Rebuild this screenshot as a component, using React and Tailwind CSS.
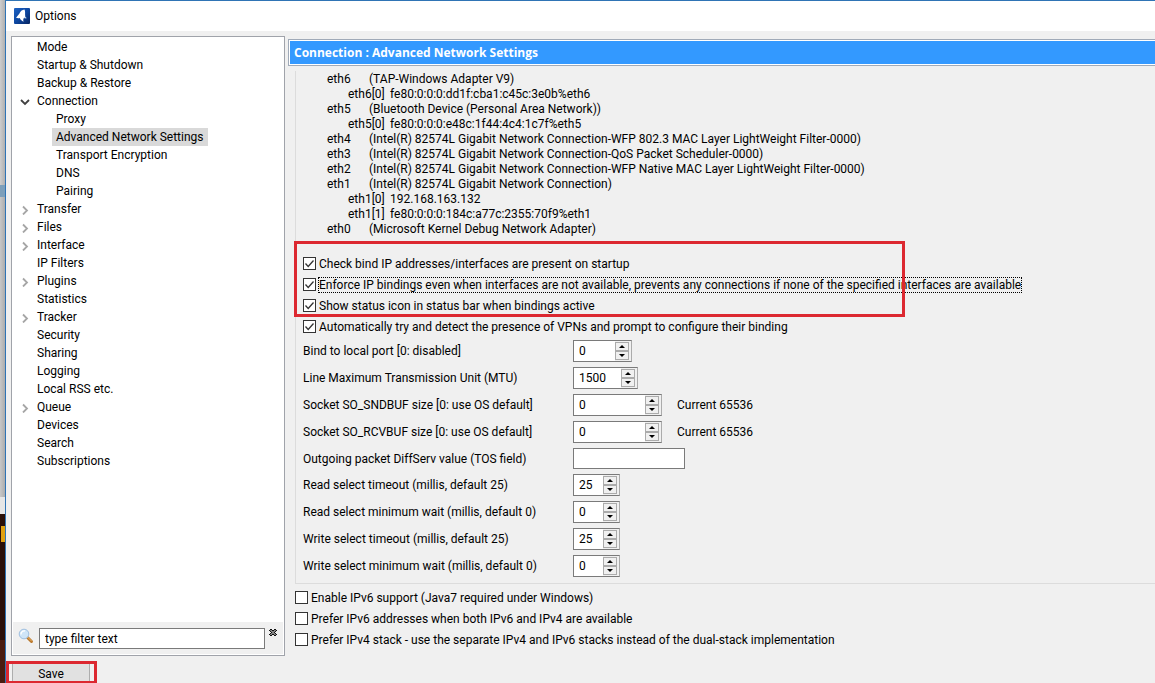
import React from 'react';
import { clsx } from 'clsx';

const treeItems = [
  { label: 'Mode' },
  { label: 'Startup & Shutdown' },
  { label: 'Backup & Restore' },
  { label: 'Connection', state: 'open' },
  { label: 'Proxy', child: true },
  { label: 'Advanced Network Settings', child: true, selected: true },
  { label: 'Transport Encryption', child: true },
  { label: 'DNS', child: true },
  { label: 'Pairing', child: true },
  { label: 'Transfer', state: 'closed' },
  { label: 'Files', state: 'closed' },
  { label: 'Interface', state: 'closed' },
  { label: 'IP Filters' },
  { label: 'Plugins', state: 'closed' },
  { label: 'Statistics' },
  { label: 'Tracker', state: 'closed' },
  { label: 'Security' },
  { label: 'Sharing' },
  { label: 'Logging' },
  { label: 'Local RSS etc.' },
  { label: 'Queue', state: 'closed' },
  { label: 'Devices' },
  { label: 'Search' },
  { label: 'Subscriptions' },
];

const adapters = [
  { name: 'eth6', info: '(TAP-Windows Adapter V9)' },
  { name: 'eth6[0]', info: 'fe80:0:0:0:dd1f:cba1:c45c:3e0b%eth6', address: true },
  { name: 'eth5', info: '(Bluetooth Device (Personal Area Network))' },
  { name: 'eth5[0]', info: 'fe80:0:0:0:e48c:1f44:4c4:1c7f%eth5', address: true },
  { name: 'eth4', info: '(Intel(R) 82574L Gigabit Network Connection-WFP 802.3 MAC Layer LightWeight Filter-0000)' },
  { name: 'eth3', info: '(Intel(R) 82574L Gigabit Network Connection-QoS Packet Scheduler-0000)' },
  { name: 'eth2', info: '(Intel(R) 82574L Gigabit Network Connection-WFP Native MAC Layer LightWeight Filter-0000)' },
  { name: 'eth1', info: '(Intel(R) 82574L Gigabit Network Connection)' },
  { name: 'eth1[0]', info: '192.168.163.132', address: true },
  { name: 'eth1[1]', info: 'fe80:0:0:0:184c:a77c:2355:70f9%eth1', address: true },
  { name: 'eth0', info: '(Microsoft Kernel Debug Network Adapter)' },
];

const fields = [
  { id: 'port', label: 'Bind to local port [0: disabled]', value: '0', width: 'w-[59px]' },
  { id: 'mtu', label: 'Line Maximum Transmission Unit (MTU)', value: '1500', width: 'w-[65px]' },
  { id: 'sndbuf', label: 'Socket SO_SNDBUF size [0: use OS default]', value: '0', width: 'w-[89px]', note: 'Current 65536' },
  { id: 'rcvbuf', label: 'Socket SO_RCVBUF size [0: use OS default]', value: '0', width: 'w-[89px]', note: 'Current 65536' },
  { id: 'tos', label: 'Outgoing packet DiffServ value (TOS field)', plain: true },
  { id: 'read-timeout', label: 'Read select timeout (millis, default 25)', value: '25', width: 'w-[47px]' },
  { id: 'read-wait', label: 'Read select minimum wait (millis, default 0)', value: '0', width: 'w-[47px]' },
  { id: 'write-timeout', label: 'Write select timeout (millis, default 25)', value: '25', width: 'w-[47px]' },
  { id: 'write-wait', label: 'Write select minimum wait (millis, default 0)', value: '0', width: 'w-[47px]' },
];

function AppIcon() {
  return (
    <svg width="16" height="16" viewBox="0 0 16 16" aria-hidden="true">
      <defs>
        <linearGradient id="logo-bg" x1="0" y1="0" x2="1" y2="1">
          <stop offset="0" stopColor="#1e63c4" />
          <stop offset="0.5" stopColor="#0d47a1" />
          <stop offset="1" stopColor="#06245f" />
        </linearGradient>
      </defs>
      <rect width="16" height="16" rx="1" fill="url(#logo-bg)" />
      <path d="M10.500 1.500C8 1.800 6.200 3.400 5.300 5.800L2 9.800c1.500.6 2.700.6 3.800.2.500 1.600 1.800 2.800 3.800 3.800-.5-1.300-.4-2.500.1-3.500 1-.5 1.700-1.200 1.500-2.600-.3-2 .3-4.200-.7-6.200z" fill="#fff" />
      <path d="M10.500 10.500l1-2 1.200 1.700z" fill="#c9e2f8" />
    </svg>
  );
}

function SearchIcon() {
  return (
    <svg width="16" height="16" viewBox="0 0 16 16" aria-hidden="true">
      <path d="M9.500 9.500l4 4" stroke="#b9772c" strokeWidth="3" strokeLinecap="round" />
      <path d="M9.800 9.300l3.700 3.700" stroke="#e9b568" strokeWidth="1" strokeLinecap="round" />
      <circle cx="6" cy="6" r="4.800" fill="#cfe5f8" stroke="#9fbfe0" />
      <path d="M3 6.500a3.200 3.200 0 0 1 4-3.500" fill="none" stroke="#fff" strokeWidth="1.400" />
    </svg>
  );
}

function ClearIcon() {
  return (
    <svg width="8" height="7" viewBox="0 0 8 7" shapeRendering="crispEdges" aria-hidden="true">
      <path d="M1 0h2v1h2V0h2v1h1v1H7v1H6v1h1v1h1v1H7v1H5V6H3v1H1V6H0V5h1V4h1V3H1V2H0V1h1z" fill="#111" />
      <path d="M1 1h2v1h2V1h2v1H6v1H5v1h1v1h1v1H5V5H3v1H1V5h1V4h1V3H2V2H1z" fill="#858585" />
    </svg>
  );
}

function Twisty({ state }) {
  if (state === 'open') {
    return (
      <svg width="10" height="10" viewBox="0 0 10 10" aria-hidden="true">
        <path d="M1 3l4 4 4-4" fill="none" stroke="#404040" strokeWidth="1.800" />
      </svg>
    );
  }
  return (
    <svg width="10" height="10" viewBox="0 0 10 10" aria-hidden="true">
      <path d="M3 1.500l4 4-4 4" fill="none" stroke="#a6a6a6" strokeWidth="1.800" />
    </svg>
  );
}

function TreeItem({ item }) {
  return (
    <li className={clsx('flex h-[18px] items-center', item.child ? 'pl-[39px]' : 'pl-[7px]')}>
      {!item.child && <span className="w-[13px] pt-px">{item.state && <Twisty state={item.state} />}</span>}
      <a href="#" className={clsx('h-[18px] px-1 leading-[18px]', item.selected && 'bg-[#d9d9d9]')}>
        {item.label}
      </a>
    </li>
  );
}

function CheckRow({ label, checked, focused }) {
  return (
    <label className="flex h-[21px] items-center gap-[2px]">
      <span className="relative flex">
        <input
          type="checkbox"
          defaultChecked={checked}
          className="peer size-[13px] appearance-none border border-[#333] bg-white"
        />
        <svg
          width="13"
          height="13"
          viewBox="0 0 13 13"
          className="pointer-events-none absolute inset-0 hidden peer-checked:block"
          aria-hidden="true"
        >
          <path d="M2.500 6.500l2.700 3 5.300-6" fill="none" stroke="#333" strokeWidth="1.300" />
        </svg>
      </span>
      <span className={clsx('border border-dotted leading-[14px]', focused ? 'border-black' : 'border-transparent')}>
        {label}
      </span>
    </label>
  );
}

function Spinner({ id, value, width }) {
  return (
    <div className={clsx('flex h-[22px] border border-t-[#7a7a7a] border-r-[#ababab] border-b-[#7a7a7a] border-l-[#7a7a7a] bg-[#f0f0f0]', width)}>
      <input id={id} type="text" defaultValue={value} className="w-0 flex-1 bg-white pl-[5px] outline-none" />
      <div className="flex w-4 flex-col py-px pr-[2px]">
        <button type="button" aria-label="Increase" className="flex flex-1 items-center justify-center border border-[#ababab] bg-[#f0f0f0]">
          <svg width="6" height="3" viewBox="0 0 6 3" aria-hidden="true">
            <path d="M0 3l3-3 3 3z" fill="#000" />
          </svg>
        </button>
        <button type="button" aria-label="Decrease" className="flex flex-1 items-center justify-center border border-[#ababab] bg-[#f0f0f0]">
          <svg width="6" height="3" viewBox="0 0 6 3" aria-hidden="true">
            <path d="M0 0l3 3 3-3z" fill="#000" />
          </svg>
        </button>
      </div>
    </div>
  );
}

function Field({ field }) {
  return (
    <div className="flex items-center">
      <label htmlFor={field.id} className="w-[270px]">{field.label}</label>
      {field.plain ? (
        <input id={field.id} type="text" className="h-[21px] w-28 border border-[#7a7a7a] bg-white px-1 outline-none" />
      ) : (
        <Spinner id={field.id} value={field.value} width={field.width} />
      )}
      {field.note && <span className="pl-[15px]">{field.note}</span>}
    </div>
  );
}

function Sidebar() {
  return (
    <div className="flex w-[274px] flex-1 flex-col border border-[#a0a3aa] bg-white p-px">
      <ul className="flex-1">
        {treeItems.map((item) => (
          <TreeItem key={item.label} item={item} />
        ))}
      </ul>
      <div className="flex h-8 items-start bg-[#f0f0f0] py-[6px] pl-[5px]">
        <SearchIcon />
        <input
          type="text"
          aria-label="Filter"
          defaultValue="type filter text"
          className="ml-[5px] h-[21px] w-[226px] border border-[#7a7a7a] bg-white px-[5px] outline-none"
        />
        <button type="button" aria-label="Clear filter" className="ml-1 pt-px">
          <ClearIcon />
        </button>
      </div>
    </div>
  );
}

function Settings() {
  return (
    <main className="min-w-0 flex-1 pt-2">
      <div className="border border-r-0 border-[#a0aab8] bg-white py-px pl-px">
        <h1 className="bg-[#3399ff] pl-1 font-['Open_Sans',sans-serif] leading-[23px] font-bold text-white">
          Connection : Advanced Network Settings
        </h1>
      </div>
      <section className="mt-[5px] ml-[7px] border-b border-l border-[#dcdcdc] pb-[6px] pl-[7px]">
        <ul className="pt-px pl-6 leading-[15px]">
          {adapters.map((a) => (
            <li key={a.name} className={clsx('flex', a.address && 'pl-[21px]')}>
              <span className="w-[42px]">{a.name}</span>
              <span>{a.info}</span>
            </li>
          ))}
        </ul>
        <div className="relative mt-4">
          <CheckRow label="Check bind IP addresses/interfaces are present on startup" checked />
          <CheckRow
            label="Enforce IP bindings even when interfaces are not available, prevents any connections if none of the specified interfaces are available"
            checked
            focused
          />
          <CheckRow label="Show status icon in status bar when bindings active" checked />
          {/* Highlight around the bind options */}
          <div className="pointer-events-none absolute -top-3 -left-[9px] h-[76px] w-[611px] border-3 border-[#dc2830]" />
        </div>
        <CheckRow label="Automatically try and detect the presence of VPNs and prompt to configure their binding" checked />
        <div className="mt-[3px] flex flex-col gap-[5px]">
          {fields.map((f) => (
            <Field key={f.id} field={f} />
          ))}
        </div>
      </section>
      <div className="mt-[3px] ml-[7px]">
        <CheckRow label="Enable IPv6 support (Java7 required under Windows)" />
        <CheckRow label="Prefer IPv6 addresses when both IPv6 and IPv4 are available" />
        <CheckRow label="Prefer IPv4 stack - use the separate IPv4 and IPv6 stacks instead of the dual-stack implementation" />
      </div>
    </main>
  );
}

/* Sliver of the desktop visible left of the window */
function DesktopEdge() {
  return (
    <div className="flex w-[5px] flex-col bg-[#2a0f08]">
      <div className="h-[185px] bg-linear-to-r from-[#cdcdcd] to-[#b0b0b0]" />
      <div className="h-3 bg-[#7d9fba]" />
      <div className="h-[300px] bg-linear-to-r from-[#c8c8c8] to-[#adadad]" />
      <div className="h-[17px] bg-[#e6e6e6]" />
      <div className="mt-3 ml-px h-4 bg-[#e0a010]" />
      <div className="mt-[98px] flex-1 bg-[#4a1c10]" />
    </div>
  );
}

export default function App() {
  return (
    <div className="flex h-screen overflow-hidden font-['Roboto','Open_Sans',sans-serif] text-[12px] whitespace-nowrap text-black">
      <DesktopEdge />
      <div className="flex min-w-0 flex-1 flex-col border-t border-l border-[#2f74b5] bg-[#f0f0f0]">
        <header className="flex h-[30px] items-center gap-[5px] bg-white pl-2">
          <AppIcon />
          <span>Options</span>
        </header>
        <div className="flex min-h-0 flex-1 gap-[3px] pl-[5px]">
          <div className="flex flex-col pt-[5px]">
            <Sidebar />
            <div className="relative mt-[7px] h-5 pl-px">
              <button type="button" className="h-[22px] w-[78px] border border-[#adadad] bg-[#e1e1e1]">
                Save
              </button>
              {/* Highlight around the save button */}
              <div className="pointer-events-none absolute -top-[2px] -left-[5px] h-[23px] w-[91px] border-3 border-[#dc2830]" />
            </div>
          </div>
          <Settings />
        </div>
      </div>
    </div>
  );
}
